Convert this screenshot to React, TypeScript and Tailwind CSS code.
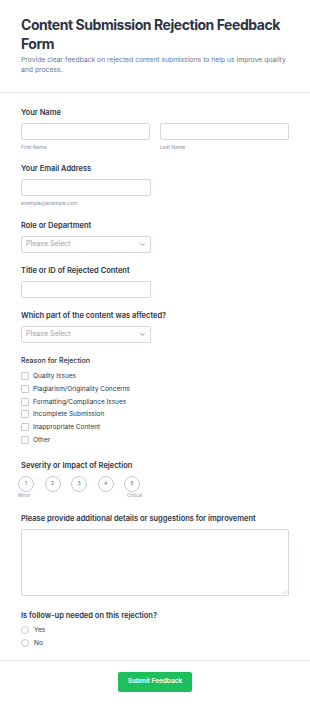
import { ChevronDown } from "lucide-react"

const reasons = [
  "Quality Issues",
  "Plagiarism/Originality Concerns",
  "Formatting/Compliance Issues",
  "Incomplete Submission",
  "Inappropriate Content",
  "Other",
]

function Label({ children }: { children: React.ReactNode }) {
  return <div className="text-[7.5px] font-semibold leading-[10px] text-[#2c3345] mb-[5px]">{children}</div>
}

function Select() {
  return (
    <div className="w-[130px] h-[17px] border border-[#d3d6e3] rounded-[2px] bg-white flex items-center justify-between px-[4px]">
      <span className="text-[7px] text-[#9aa1b9]">Please Select</span>
      <ChevronDown className="w-[7px] h-[7px] text-[#57647e]" strokeWidth={2.5} />
    </div>
  )
}

export default function App() {
  return (
    <div className="w-[310px] bg-white" style={{ fontFamily: "Inter, 'Noto Sans', sans-serif" }}>
      <div className="px-[21px] pt-[15px] pb-[17px] border-b border-[#e6e8ee]">
        <h1 className="text-[14px] font-bold leading-[19px] tracking-[-0.45px] text-[#2c3345]">
          Content Submission Rejection Feedback Form
        </h1>
        <p className="mt-[2px] text-[6.8px] leading-[10px] text-[#6b7592]">
          Provide clear feedback on rejected content submissions to help us improve quality and process.
        </p>
      </div>

      <div className="px-[21px] pt-[15px]">
        <Label>Your Name</Label>
        <div className="flex gap-[10px]">
          <div className="flex-1">
            <div className="h-[17px] border border-[#d3d6e3] rounded-[2px]" />
            <div className="mt-[4px] text-[5px] leading-[7px] text-[#8d8fa8]">First Name</div>
          </div>
          <div className="flex-1">
            <div className="h-[17px] border border-[#d3d6e3] rounded-[2px]" />
            <div className="mt-[4px] text-[5px] leading-[7px] text-[#8d8fa8]">Last Name</div>
          </div>
        </div>

        <div className="mt-[13px]">
          <Label>Your Email Address</Label>
          <div className="w-[130px] h-[17px] border border-[#d3d6e3] rounded-[2px]" />
          <div className="mt-[4px] text-[5px] leading-[7px] text-[#8d8fa8]">example@example.com</div>
        </div>

        <div className="mt-[14px]">
          <Label>Role or Department</Label>
          <Select />
        </div>

        <div className="mt-[13px]">
          <Label>Title or ID of Rejected Content</Label>
          <div className="w-[130px] h-[17px] border border-[#d3d6e3] rounded-[2px]" />
        </div>

        <div className="mt-[13px]">
          <Label>Which part of the content was affected?</Label>
          <Select />
        </div>

        <div className="mt-[13px]">
          <div className="text-[7px] font-medium leading-[10px] text-[#2c3345] mb-[6px]">Reason for Rejection</div>
          <div className="flex flex-col gap-[4.8px]">
            {reasons.map((r) => (
              <div key={r} className="flex items-center gap-[4px] h-[8px]">
                <div className="w-[8px] h-[8px] border border-[#c3cad8] rounded-[1px]" />
                <span className="text-[6.5px] leading-[8px] text-[#2c3345]">{r}</span>
              </div>
            ))}
          </div>
        </div>

        <div className="mt-[17px]">
          <Label>Severity or Impact of Rejection</Label>
          <div className="flex gap-[10.5px] -ml-[3px]">
            {[1, 2, 3, 4, 5].map((n) => (
              <div key={n} className="w-[16px] h-[16px] rounded-full border border-[#c3cad8] flex items-center justify-center text-[5px] text-[#57647e]">
                {n}
              </div>
            ))}
          </div>
          <div className="flex w-[124px] justify-between -ml-[3px] mt-[1px] text-[4.5px] leading-[6px] text-[#8d8fa8]">
            <span>Minor</span>
            <span>Critical</span>
          </div>
        </div>

        <div className="mt-[15px]">
          <Label>Please provide additional details or suggestions for improvement</Label>
          <div className="relative h-[67px] border border-[#d3d6e3] rounded-[2px]">
            <svg className="absolute right-[1px] bottom-[1px] w-[4px] h-[4px]" viewBox="0 0 4 4">
              <path d="M4 0L0 4M4 2L2 4" stroke="#b5bac9" strokeWidth="0.6" />
            </svg>
          </div>
        </div>

        <div className="mt-[15px] pb-[13px]">
          <Label>Is follow-up needed on this rejection?</Label>
          <div className="flex flex-col gap-[5px]">
            {["Yes", "No"].map((o) => (
              <div key={o} className="flex items-center gap-[5px] h-[8px]">
                <div className="w-[8px] h-[8px] rounded-full border border-[#c3cad8]" />
                <span className="text-[6.5px] leading-[8px] text-[#2c3345]">{o}</span>
              </div>
            ))}
          </div>
        </div>
      </div>

      <div className="border-t border-[#e6e8ee] flex justify-center pt-[11px] pb-[16px]">
        <button className="w-[74px] h-[20px] rounded-[2px] bg-[#1dbe5c] text-white text-[6.5px] font-semibold">
          Submit Feedback
        </button>
      </div>
    </div>
  )
}
